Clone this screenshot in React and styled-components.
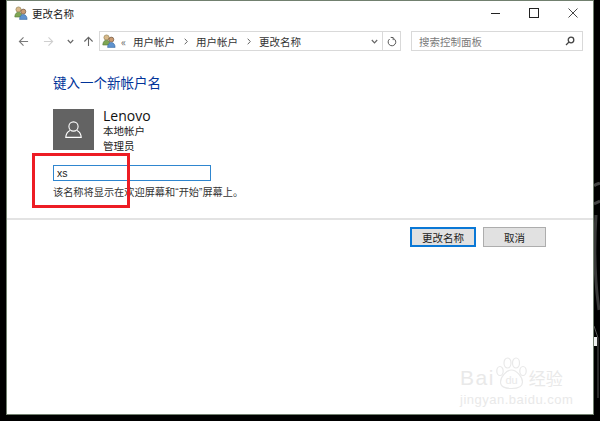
import React from "react";
import styled, { createGlobalStyle } from "styled-components";

const cjk = `"Noto Sans CJK SC", "Noto Sans", sans-serif`;

const GlobalStyle = createGlobalStyle`
  html, body {
    margin: 0;
    padding: 0;
    background: #000;
  }
  body {
    font-family: ${cjk};
  }
`;

const Page = styled.div`
  position: relative;
  width: 600px;
  height: 421px;
  overflow: hidden;
  background: #000;
  padding-left: 6px;
  box-sizing: border-box;
`;

const Window = styled.div`
  position: relative;
  width: 588px;
  height: 415px;
  box-sizing: border-box;
  background: #fff;
  border: 1px solid #71806f;
  display: flex;
  flex-direction: column;
`;

const TitleBar = styled.div`
  height: 24px;
  display: flex;
  align-items: center;
  padding-left: 7px;
`;

const TitleText = styled.span`
  margin-left: 4px;
  font-size: 10.5px;
  color: #222;
`;

const WindowControls = styled.div`
  margin-left: auto;
  display: flex;
  align-items: center;
  gap: 29px;
  padding-right: 15px;
`;

const NavBar = styled.div`
  height: 20px;
  margin-top: 6px;
  display: flex;
  align-items: center;
  padding-left: 11px;
`;

const NavButton = styled.span`
  width: ${(p) => p.$w}px;
  display: flex;
  align-items: center;
`;

const AddressBox = styled.div`
  width: 302px;
  height: 20px;
  box-sizing: border-box;
  border: 1px solid #d9d9d9;
  display: flex;
  align-items: center;
  padding-left: 2px;
  font-size: 10.5px;
  color: #333;
`;

const Crumb = styled.span`
  margin-right: 8.5px;
  white-space: nowrap;
`;

const Back = styled.span`
  margin: 0 7px 0 5px;
  color: #666;
`;

const Sep = styled.span`
  margin-right: 8.5px;
  display: flex;
`;

const AddressEnd = styled.div`
  margin-left: auto;
  display: flex;
  align-items: center;
  height: 100%;
`;

const RefreshCell = styled.span`
  width: 17px;
  height: 100%;
  border-left: 1px solid #d9d9d9;
  margin-left: 4px;
  display: flex;
  align-items: center;
  justify-content: center;
`;

const SearchBox = styled.div`
  width: 172px;
  height: 20px;
  margin-left: 10px;
  box-sizing: border-box;
  border: 1px solid #d9d9d9;
  display: flex;
  align-items: center;
  justify-content: space-between;
  padding: 0 7px;
  font-size: 10.5px;
  color: #7a7a7a;
`;

const Content = styled.div`
  padding: 22px 0 0 46px;
  display: flex;
  flex-direction: column;
  align-items: flex-start;
`;

const Heading = styled.h1`
  margin: 0;
  height: 18px;
  line-height: 18px;
  font-size: 13.5px;
  font-weight: 400;
  color: #003399;
`;

const Account = styled.div`
  margin-top: 18px;
  display: flex;
  gap: 9px;
`;

const Avatar = styled.div`
  width: 41px;
  height: 41px;
  background: #636363;
  display: flex;
  align-items: center;
  justify-content: center;
`;

const AccountInfo = styled.div`
  margin-top: -1px;
  display: flex;
  flex-direction: column;
  gap: 1px;
  font-size: 10.5px;
  line-height: 14px;
  color: #222;
`;

const AccountName = styled.span`
  font-family: "Open Sans", "Noto Sans", sans-serif;
  font-size: 14px;
  line-height: 15px;
  color: #111;
`;

const NameInput = styled.input`
  margin-top: 12px;
  width: 158px;
  height: 16px;
  box-sizing: border-box;
  border: 1px solid #2f86cf;
  outline: none;
  padding: 0 3px;
  font-family: "Liberation Sans", sans-serif;
  font-size: 10.5px;
  color: #222;
  background: #fff;
`;

const Hint = styled.p`
  margin: 4px 0 0;
  font-family: "Liberation Sans", ${cjk};
  font-size: 10.2px;
  line-height: 15px;
  color: #333;
  white-space: nowrap;
`;

const Divider = styled.div`
  height: 2px;
  margin-top: 18px;
  background: #e3e3e3;
`;

const Actions = styled.div`
  display: flex;
  gap: 7px;
  margin-top: 7px;
  padding-left: 403px;
`;

const Button = styled.button`
  width: ${(p) => p.$w}px;
  height: 20px;
  padding: 0;
  box-sizing: border-box;
  background: #e1e1e1;
  border: ${(p) => (p.$primary ? "2px solid #0a78d6" : "1px solid #adadad")};
  font-family: ${cjk};
  font-size: 10.5px;
  color: #222;
`;

// hand annotation drawn over the dialog
const RedBox = styled.div`
  position: absolute;
  left: 32px;
  top: 153px;
  width: 98px;
  height: 55px;
  box-sizing: border-box;
  border: 3px solid #ed1c24;
`;

const Watermark = styled.div`
  position: absolute;
  left: 460px;
  top: 356px;
  width: 108px;
  display: flex;
  flex-direction: column;
  color: #e9e9e9;
`;

const MarkRow = styled.div`
  display: flex;
  align-items: flex-end;
  height: 34px;
`;

const MarkLatin = styled.span`
  font-family: "Liberation Sans", sans-serif;
  font-size: 21px;
  line-height: 24px;
  letter-spacing: 1.5px;
`;

const MarkCn = styled.span`
  font-family: ${cjk};
  font-size: 17px;
  line-height: 24px;
  margin-left: 1px;
`;

const MarkUrl = styled.span`
  font-family: "Liberation Sans", sans-serif;
  font-size: 13px;
  line-height: 14px;
  letter-spacing: 0.5px;
  margin-top: 3px;
  white-space: nowrap;
`;

// desktop wallpaper showing past the right edge
const Wallpaper = styled.svg`
  position: absolute;
  left: 594px;
  top: 0;
`;

const UsersIcon = () => (
  <svg width="14" height="14" viewBox="0 0 14 14">
    <circle cx="4.5" cy="3.5" r="2.6" fill="#d9b98a" stroke="#8a7a4a" strokeWidth="0.6" />
    <path d="M0.8 11c0-3 1.5-4.8 3.7-4.8S8 8 8 11z" fill="#7fa653" stroke="#55783a" strokeWidth="0.6" />
    <circle cx="9.3" cy="5.6" r="2.5" fill="#c99a72" stroke="#5a4430" strokeWidth="0.6" />
    <path d="M5.6 13.4c0-3 1.5-4.9 3.7-4.9s3.8 1.9 3.8 4.9z" fill="#5f93cf" stroke="#3a6aa0" strokeWidth="0.6" />
  </svg>
);

const Arrow = ({ color, flip, up }) => (
  <svg
    width="11"
    height="11"
    viewBox="0 0 12 12"
    fill="none"
    stroke={color}
    strokeWidth="1.2"
    style={{ transform: up ? "rotate(90deg)" : flip ? "scaleX(-1)" : "none" }}
  >
    <path d="M11 6H1.5M6 1.5 1.5 6 6 10.5" />
  </svg>
);

const Chevron = ({ color = "#666" }) => (
  <svg width="7" height="5" viewBox="0 0 7 5" fill="none" stroke={color} strokeWidth="1.2">
    <path d="M.8 1 3.5 3.8 6.2 1" />
  </svg>
);

const CrumbArrow = () => (
  <svg width="4" height="7" viewBox="0 0 4 7" fill="none" stroke="#666" strokeWidth="1">
    <path d="M.7.7 3.3 3.5.7 6.3" />
  </svg>
);

const Refresh = () => (
  <svg width="10" height="11" viewBox="0 0 10 11" fill="none" stroke="#555" strokeWidth="1">
    <path d="M6.7 2.6A3.8 3.8 0 1 1 2.6 3" />
    <path d="M2.2.8 4.7 1v2.5" transform="translate(1.5 .6)" />
  </svg>
);

const SearchIcon = () => (
  <svg width="10" height="10" viewBox="0 0 10 10" fill="none" stroke="#444" strokeWidth="1.3">
    <circle cx="6" cy="4" r="2.8" />
    <path d="M4 6 1 9" />
  </svg>
);

const Person = () => (
  <svg width="17" height="17" viewBox="0 0 17 17" fill="none" stroke="#fff" strokeWidth="1.1">
    <circle cx="8.5" cy="5.5" r="4.6" />
    <path d="M5 9.5C2.5 10.6 1 13 .8 16.4h15.4C16 13 14.5 10.6 12 9.5" />
  </svg>
);

const Paw = () => (
  <svg width="33" height="33" viewBox="0 0 33 33" fill="none" stroke="#e9e9e9" strokeWidth="1.2">
    <ellipse cx="12.5" cy="6" rx="3.5" ry="5" />
    <ellipse cx="21" cy="6" rx="3.5" ry="5" />
    <ellipse cx="5" cy="14" rx="3.2" ry="4.5" />
    <ellipse cx="28" cy="14" rx="3.2" ry="4.5" />
    <path d="M16.5 13c5 0 11 7 11 12s-5 6.5-11 6.5-11-1.5-11-6.5 6-12 11-12z" />
    <text x="16.5" y="27" fontSize="11" fontFamily="Liberation Sans" textAnchor="middle" fill="#e9e9e9" stroke="none">du</text>
  </svg>
);

const App = () => (
  <Page>
    <GlobalStyle />
    <Window>
      <TitleBar>
        <UsersIcon />
        <TitleText>更改名称</TitleText>
        <WindowControls>
          <svg width="9" height="9" viewBox="0 0 9 9" stroke="#222" strokeWidth="1">
            <path d="M0 4.5h9" />
          </svg>
          <svg width="10" height="10" viewBox="0 0 10 10" fill="none" stroke="#222" strokeWidth="1">
            <rect x=".5" y=".5" width="9" height="9" />
          </svg>
          <svg width="10" height="10" viewBox="0 0 10 10" stroke="#333" strokeWidth="0.9">
            <path d="M.5.5l9 9M9.5.5l-9 9" />
          </svg>
        </WindowControls>
      </TitleBar>
      <NavBar>
        <NavButton $w={25}><Arrow color="#7a7a7a" /></NavButton>
        <NavButton $w={24}><Arrow color="#cfcfcf" flip /></NavButton>
        <NavButton $w={16}><Chevron /></NavButton>
        <NavButton $w={16}><Arrow color="#666" up /></NavButton>
        <AddressBox>
          <UsersIcon />
          <Back>«</Back>
          <Crumb>用户帐户</Crumb>
          <Sep><CrumbArrow /></Sep>
          <Crumb>用户帐户</Crumb>
          <Sep><CrumbArrow /></Sep>
          <Crumb>更改名称</Crumb>
          <AddressEnd>
            <Chevron />
            <RefreshCell><Refresh /></RefreshCell>
          </AddressEnd>
        </AddressBox>
        <SearchBox>
          <span>搜索控制面板</span>
          <SearchIcon />
        </SearchBox>
      </NavBar>
      <Content>
        <Heading>键入一个新帐户名</Heading>
        <Account>
          <Avatar><Person /></Avatar>
          <AccountInfo>
            <AccountName>Lenovo</AccountName>
            <span>本地帐户</span>
            <span>管理员</span>
          </AccountInfo>
        </Account>
        <NameInput defaultValue="xs" />
        <Hint>该名称将显示在欢迎屏幕和“开始”屏幕上。</Hint>
      </Content>
      <Divider />
      <Actions>
        <Button $primary $w={66}>更改名称</Button>
        <Button $w={63}>取消</Button>
      </Actions>
    </Window>
    <RedBox />
    <Watermark>
      <MarkRow>
        <MarkLatin>Bai</MarkLatin>
        <Paw />
        <MarkCn>经验</MarkCn>
      </MarkRow>
      <MarkUrl>jingyan.baidu.com</MarkUrl>
    </Watermark>
    <Wallpaper width="6" height="421" viewBox="0 0 6 421" fill="none">
      <path d="M0 186c2-2 4-2 6-3M0 204c2-1 4-2 6-3" stroke="#444" strokeWidth="3" />
      <path d="M2 215c-2 30-2 60 3 95" stroke="#3a3a3a" strokeWidth="3" />
      <path d="M0 326l4 12v60" stroke="#555" strokeWidth="1" />
      <rect x="0" y="337" width="3" height="9" fill="#eee" />
    </Wallpaper>
  </Page>
);

export default App;
